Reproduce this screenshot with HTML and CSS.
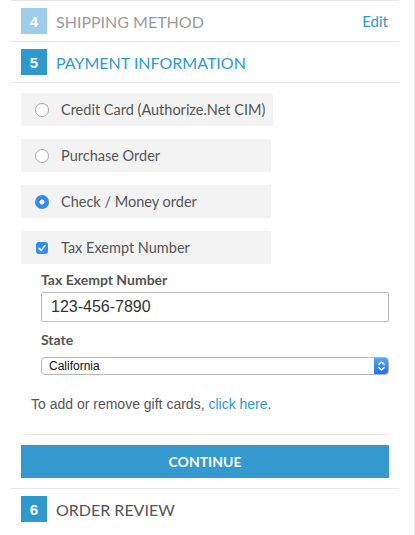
FILE: index.html
```html
<!DOCTYPE html>
<html>
<head>
<meta charset="utf-8">
<link rel="stylesheet" href="styles.css">
</head>
<body>
<div class="panel">
  <div class="step step-done">
    <span class="num">4</span>
    <span class="title">SHIPPING METHOD</span>
    <a class="edit" href="#">Edit</a>
  </div>
  <div class="step step-active">
    <span class="num">5</span>
    <span class="title">PAYMENT INFORMATION</span>
  </div>
  <div class="step-body">
    <label class="option option-wide">
      <span class="radio"></span>
      <span class="opt-text">Credit Card (Authorize.Net CIM)</span>
    </label>
    <label class="option">
      <span class="radio"></span>
      <span class="opt-text">Purchase Order</span>
    </label>
    <label class="option">
      <span class="radio radio-on"></span>
      <span class="opt-text">Check / Money order</span>
    </label>
    <label class="option">
      <span class="check">
        <svg width="12" height="12" viewBox="0 0 12 12"><path d="M3 6.3 L5.1 8.4 L9 3.6" fill="none" stroke="#fff" stroke-width="1.6" stroke-linecap="round" stroke-linejoin="round"/></svg>
      </span>
      <span class="opt-text">Tax Exempt Number</span>
    </label>

    <div class="fields">
      <div class="field-label">Tax Exempt Number</div>
      <div class="text-input">123-456-7890</div>
      <div class="field-label field-label-state">State</div>
      <div class="select">
        <span class="select-value">California</span>
        <span class="select-btn">
          <svg width="9" height="12" viewBox="0 0 9 12"><path d="M1.8 4.6 L4.5 2 L7.2 4.6 M1.8 7.4 L4.5 10 L7.2 7.4" fill="none" stroke="#fff" stroke-width="1.4" stroke-linecap="round" stroke-linejoin="round"/></svg>
        </span>
      </div>
    </div>

    <p class="gift">To add or remove gift cards, <a href="#">click here</a>.</p>

    <div class="actions">
      <button class="continue">CONTINUE</button>
    </div>
  </div>
  <div class="step step-next">
    <span class="num">6</span>
    <span class="title">ORDER REVIEW</span>
  </div>
</div>
</body>
</html>
```

FILE: styles.css
```css
html, body {
  margin: 0;
  padding: 0;
  background: #fff;
}

.panel {
  width: 388px;
  padding: 0 15px 0 11px;
  border-right: 1px solid #ececec;
  min-height: 535px;
  box-sizing: content-box;
  font-family: "Lato", "Open Sans", sans-serif;
  color: #555;
}

.step {
  display: flex;
  align-items: center;
  height: 40px;
  padding: 0 11px 0 10px;
  border-top: 1px solid #e8e8e8;
}

.num {
  width: 26px;
  height: 26px;
  display: flex;
  align-items: center;
  justify-content: center;
  color: #fff;
  font-family: "Liberation Sans", Arial, sans-serif;
  font-weight: bold;
  font-size: 15px;
  background: #2e98cf;
}

.step-done .num {
  background: #9ecde9;
}

.title {
  margin-left: 9px;
  font-size: 16px;
  color: #555;
}

.step-done .title {
  color: #9b9b9b;
}

.step-active .title {
  color: #2e98cf;
}

.edit {
  margin-left: auto;
  color: #2e98cf;
  text-decoration: none;
  font-size: 15px;
}

.step-body {
  border-top: 1px solid #e8e8e8;
  padding: 10px;
}

.option {
  display: flex;
  align-items: center;
  width: 250px;
  height: 33px;
  margin-bottom: 13px;
  padding-left: 14px;
  box-sizing: border-box;
  background: #f3f3f3;
  font-size: 14.5px;
  color: #555;
}

.option-wide {
  width: 252px;
}

.radio {
  width: 14px;
  height: 14px;
  box-sizing: border-box;
  border-radius: 50%;
  border: 1px solid #a9a9a9;
  background: #fff;
  flex: none;
}

.radio-on {
  border: none;
  background: radial-gradient(circle, #fff 0 2.2px, #2f8df4 2.8px);
}

.check {
  width: 12px;
  height: 12px;
  margin-left: 1px;
  margin-right: 1px;
  border-radius: 3px;
  background: #2f8df4;
  display: flex;
  flex: none;
}

.opt-text {
  margin-left: 12px;
}

.fields {
  padding-left: 20px;
  margin-top: -6px;
}

.field-label {
  font-weight: bold;
  font-size: 14px;
  line-height: 18px;
  color: #555;
  margin-bottom: 3px;
}

.field-label-state {
  margin-top: 9px;
  margin-bottom: 8px;
}

.text-input {
  height: 30px;
  box-sizing: border-box;
  border: 1px solid #bdbdbd;
  border-radius: 2px;
  padding-left: 9px;
  display: flex;
  align-items: center;
  font-family: "Liberation Sans", Arial, sans-serif;
  font-size: 16px;
  color: #333;
}

.select {
  height: 18px;
  box-sizing: border-box;
  border: 1px solid #b8b8b8;
  border-radius: 4px;
  display: flex;
  align-items: center;
  overflow: hidden;
  font-family: "Liberation Sans", Arial, sans-serif;
  font-size: 12px;
  color: #111;
}

.select-value {
  flex: 1;
  padding-left: 7px;
}

.select-btn {
  width: 15px;
  height: 18px;
  margin-right: -1px;
  background: linear-gradient(#5aa8fb, #1a6ff2);
  display: flex;
  align-items: center;
  justify-content: center;
}

.gift {
  margin: 20px 0 0 10px;
  font-family: "Liberation Sans", Arial, sans-serif;
  font-size: 14px;
  line-height: 18px;
  color: #555;
}

.gift a {
  color: #2e98cf;
  text-decoration: none;
}

.actions {
  margin-top: 21px;
  border-top: 1px solid #ececec;
  padding-top: 10px;
}

.continue {
  display: block;
  width: 100%;
  height: 33px;
  border: none;
  background: #3399cf;
  color: #fff;
  font-family: "Lato", "Open Sans", sans-serif;
  font-size: 14px;
  font-weight: bold;
  padding: 0;
}
```
